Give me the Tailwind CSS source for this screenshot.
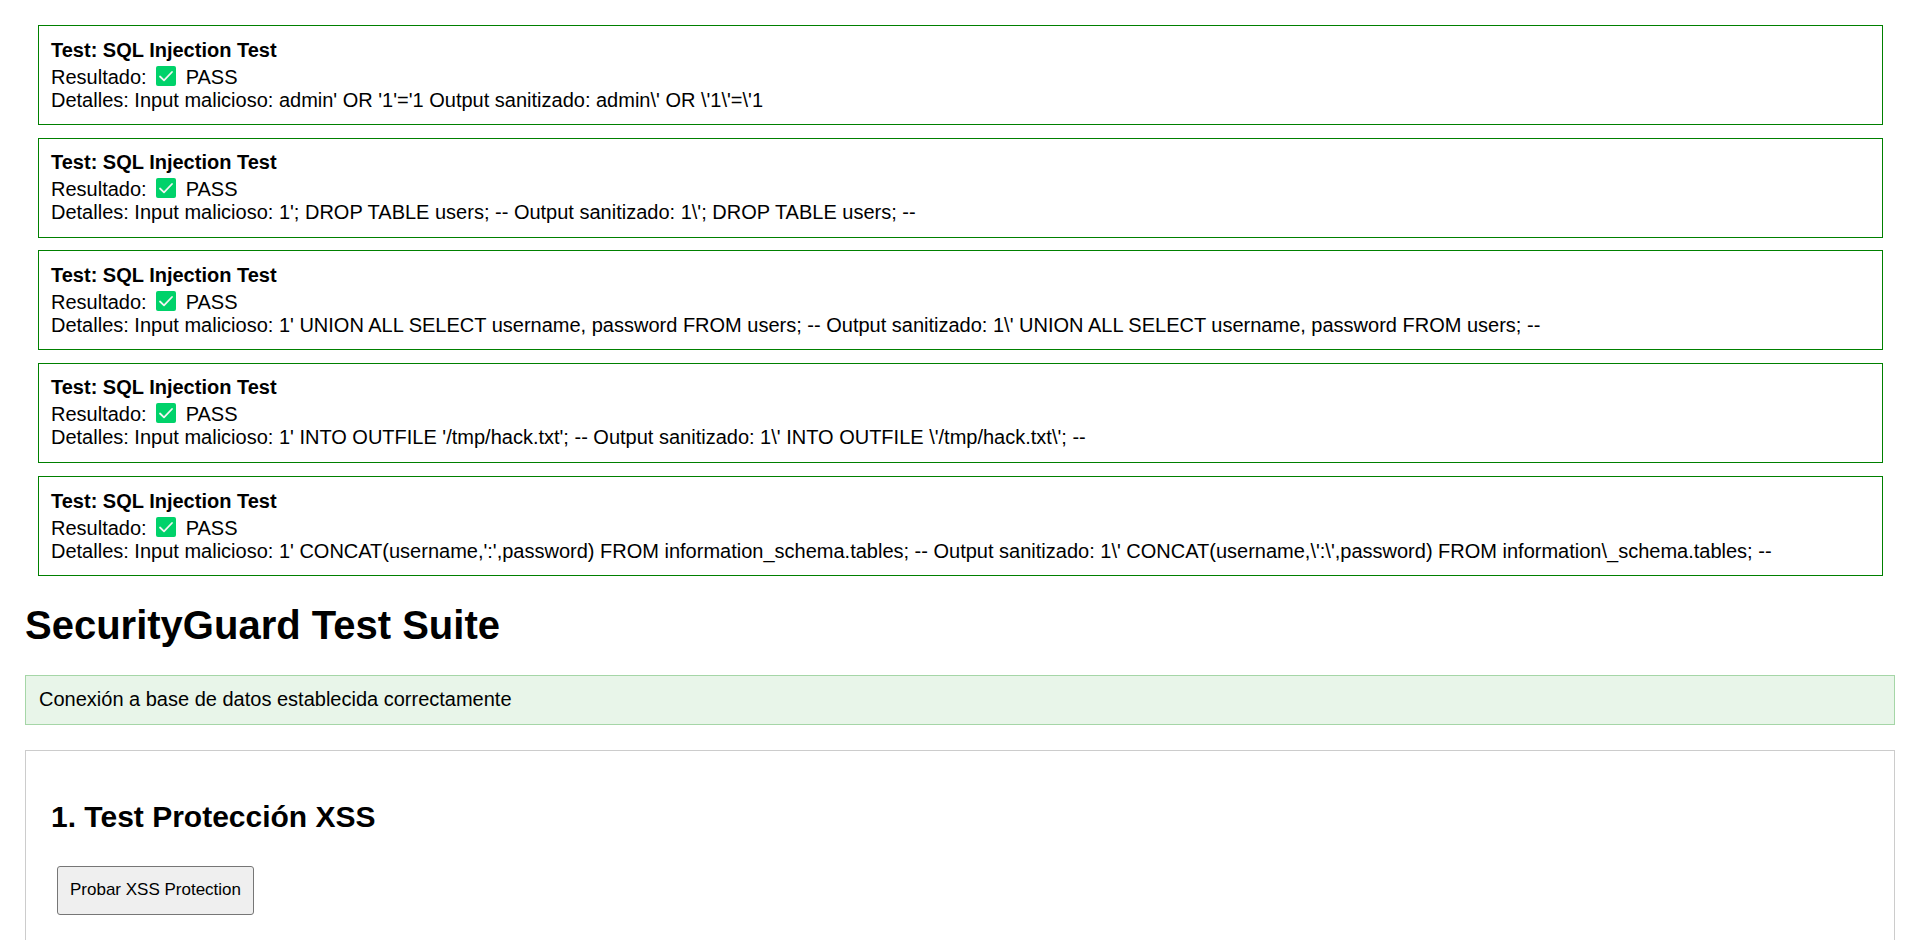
<!DOCTYPE html>
<html lang="es">
<head>
<meta charset="utf-8">
<title>SecurityGuard Test Suite</title>
<script src="https://cdn.jsdelivr.net/npm/@tailwindcss/browser@4"></script>
</head>
<body class="bg-white px-[25px] pt-[25px] font-['Liberation_Sans',Arial,sans-serif] text-[20px] leading-[23px] text-black">
<svg class="hidden" aria-hidden="true">
  <symbol id="check" viewBox="0 0 20 20">
    <rect width="20" height="20" rx="2" fill="#00d26a"/>
    <path d="M4 10.5 8 14.3 16 6" fill="none" stroke="#f4f4f4" stroke-width="1.8" stroke-linecap="round" stroke-linejoin="round"/>
  </symbol>
</svg>
<section class="mr-3 ml-[13px]">
  <article class="border border-[#008000] px-3 pt-[13px] pb-3">
    <p class="font-bold">Test: SQL Injection Test</p>
    <p class="flex pt-1">Resultado: <svg class="mr-[10px] ml-[9px] h-5 w-5" role="img" aria-label="Correcto"><use href="#check"/></svg>PASS</p>
    <p>Detalles: Input malicioso: admin' OR '1'='1 Output sanitizado: admin\' OR \'1\'=\'1</p>
  </article>
  <article class="mt-[13px] border border-[#008000] px-3 pt-3 pb-[13px]">
    <p class="font-bold">Test: SQL Injection Test</p>
    <p class="flex pt-1">Resultado: <svg class="mr-[10px] ml-[9px] h-5 w-5" role="img" aria-label="Correcto"><use href="#check"/></svg>PASS</p>
    <p>Detalles: Input malicioso: 1'; DROP TABLE users; -- Output sanitizado: 1\'; DROP TABLE users; --</p>
  </article>
  <article class="mt-3 border border-[#008000] px-3 pt-[13px] pb-3">
    <p class="font-bold">Test: SQL Injection Test</p>
    <p class="flex pt-1">Resultado: <svg class="mr-[10px] ml-[9px] h-5 w-5" role="img" aria-label="Correcto"><use href="#check"/></svg>PASS</p>
    <p>Detalles: Input malicioso: 1' UNION ALL SELECT username, password FROM users; -- Output sanitizado: 1\' UNION ALL SELECT username, password FROM users; --</p>
  </article>
  <article class="mt-[13px] border border-[#008000] px-3 pt-3 pb-[13px]">
    <p class="font-bold">Test: SQL Injection Test</p>
    <p class="flex pt-1">Resultado: <svg class="mr-[10px] ml-[9px] h-5 w-5" role="img" aria-label="Correcto"><use href="#check"/></svg>PASS</p>
    <p>Detalles: Input malicioso: 1' INTO OUTFILE '/tmp/hack.txt'; -- Output sanitizado: 1\' INTO OUTFILE \'/tmp/hack.txt\'; --</p>
  </article>
  <article class="mt-[13px] border border-[#008000] px-3 pt-[13px] pb-3">
    <p class="font-bold">Test: SQL Injection Test</p>
    <p class="flex pt-1">Resultado: <svg class="mr-[10px] ml-[9px] h-5 w-5" role="img" aria-label="Correcto"><use href="#check"/></svg>PASS</p>
    <p>Detalles: Input malicioso: 1' CONCAT(username,':',password) FROM information_schema.tables; -- Output sanitizado: 1\' CONCAT(username,\':\',password) FROM information\_schema.tables; --</p>
  </article>
</section>
<main>
  <h1 class="mt-[27px] text-[40px] leading-[45px] font-bold">SecurityGuard Test Suite</h1>
  <p class="mt-[27px] border border-[#a5d6a7] bg-[#e8f5e9] px-[13px] pt-3 pb-[13px]">Conexión a base de datos establecida correctamente</p>
  <section class="mt-[25px] border border-b-0 border-[#cccccc] px-[25px] pt-[25px] pb-[26px]">
    <h2 class="mt-6 text-[30px] leading-[34px] font-bold">1. Test Protección XSS</h2>
    <button type="button" class="mx-[6px] mt-8 block rounded-[3px] border border-[#767676] bg-[#efefef] px-3 pt-[13px] pb-[15px] text-[17px] leading-[19px]">Probar XSS Protection</button>
  </section>
</main>
</body>
</html>
